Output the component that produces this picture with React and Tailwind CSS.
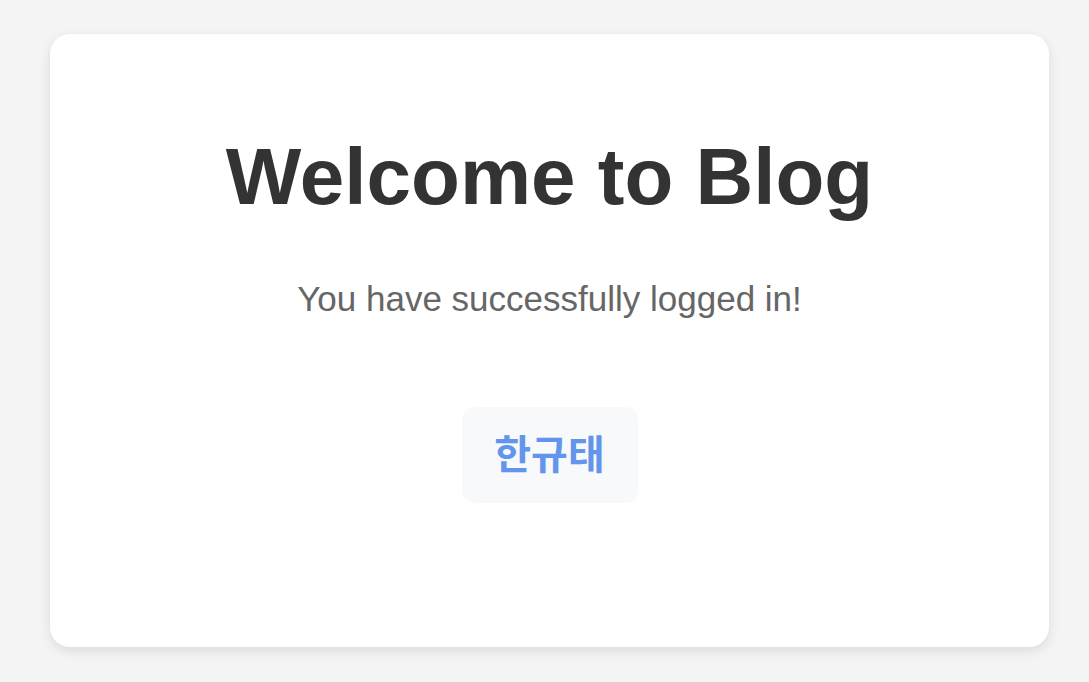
import React from "react";

const App = () => {
  return (
    <div className="min-h-screen bg-[#f4f4f4] pt-[34px] font-['Liberation_Sans','Noto_Sans_CJK_KR',sans-serif]">
      <div className="ml-[50px] flex h-[613px] w-[999px] flex-col items-center rounded-[20px] bg-white pt-[103px] shadow-[0_4px_12px_rgba(0,0,0,0.1)]">
        <h1 className="text-[80px] font-bold leading-none text-[#333]">Welcome to Blog</h1>
        <p className="mt-[64px] text-[35px] leading-none text-[#666]">You have successfully logged in!</p>
        <div className="mt-[91px] flex h-[96px] w-[176px] items-center justify-center rounded-[12px] bg-[#f8f9fa]">
          <span className="text-[40px] font-bold text-[#6495ed]">한규태</span>
        </div>
      </div>
    </div>
  );
};

export default App;
